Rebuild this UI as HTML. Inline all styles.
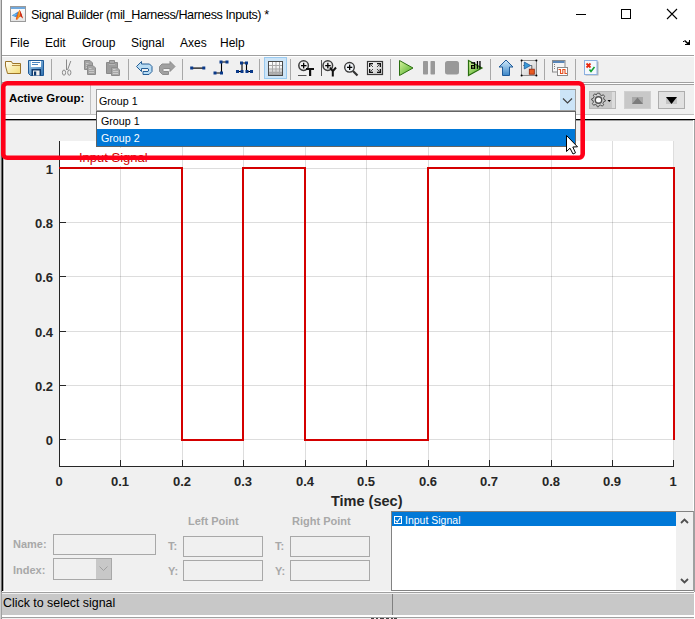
<!DOCTYPE html>
<html><head><meta charset="utf-8">
<style>
*{margin:0;padding:0;box-sizing:border-box}
html,body{width:695px;height:619px;overflow:hidden;background:#f0f0f0;font-family:"Liberation Sans",sans-serif;position:relative}
.a{position:absolute}
.t{position:absolute;white-space:nowrap;line-height:1}
.xl{width:60px;text-align:center;font-size:13px;font-weight:bold;color:#262626}
.gl{font-size:11px;font-weight:bold;color:#a8a8a8}
.yl{width:53px;text-align:right;font-size:13px;font-weight:bold;color:#262626}
</style></head><body>
<!-- title bar -->
<div class="a" style="left:0;top:0;width:695px;height:55px;background:#fff"></div>
<div class="a" style="left:0;top:0;width:1px;height:619px;background:#d0d0d0"></div>
<div class="a" style="left:1px;top:0;width:1px;height:619px;background:#8c8c8c"></div>
<div class="a" style="left:694px;top:0;width:1px;height:619px;background:#fff"></div>
<div class="t" style="left:31px;top:8.6px;font-size:12.6px;letter-spacing:-0.41px;color:#000">Signal Builder (mil_Harness/Harness Inputs) *</div>
<!-- title icon -->
<svg class="a" style="left:0;top:0" width="40" height="30">
<defs><linearGradient id="gW" x1="0" y1="0" x2="0" y2="1"><stop offset="0" stop-color="#ffffff"/><stop offset="1" stop-color="#e4e4e4"/></linearGradient>
<linearGradient id="gO" x1="0" y1="0" x2="0" y2="1"><stop offset="0" stop-color="#e83010"/><stop offset="0.5" stop-color="#f09020"/><stop offset="1" stop-color="#f0b020"/></linearGradient></defs>
<rect x="10.5" y="6.5" width="15" height="15" fill="url(#gW)" stroke="#9a9a9a" stroke-width="1"/>
<rect x="11" y="7" width="14" height="2" fill="#70a8dc"/>
<path d="M11.8 15.4 L15.5 13.2 L18.2 11.6 L18.6 13 L16.4 17.2 L14.2 16.6 Z" fill="#3d8fd6"/>
<path d="M12.5 15.3 L16 13.5 L17 14.5 L14.5 16 Z" fill="#6cb4ec"/>
<path d="M19.6 9.8 L18 12.5 L16.3 17 L15.8 19.2 L17 20 L18.6 18 L20.6 16.3 L22.9 18.6 L21.6 14.2 Z" fill="#e85a18"/>
<path d="M19.6 9.8 L18.8 12 L18 16 L17 19.5 L18.6 18 L19.8 15 Z" fill="#f4a21c"/>
<path d="M19.6 9.8 L19.4 12 L19.2 14.5 L20 13 Z" fill="#ffd040"/>
<path d="M19.6 9.8 L21.6 14.2 L22.9 18.6 L20.6 16.3 Z" fill="#c8281a"/>
</svg>
<!-- menu arrow -->
<svg class="a" style="left:680px;top:37px" width="14" height="12">
<rect x="3" y="4" width="1" height="1" fill="#000"/>
<path d="M4.5 3.5 L9 7.5" stroke="#000" stroke-width="1.6"/>
<path d="M9 3 H10 V8 H5 V7 H9 Z" fill="#000"/>
<path d="M10 3.5 L10 8 L5.5 8 Z" fill="#000"/>
</svg>

<!-- window controls -->
<div class="a" style="left:576px;top:14px;width:10px;height:1px;background:#000"></div>
<div class="a" style="left:621px;top:9px;width:10px;height:10px;border:1px solid #000"></div>
<svg class="a" style="left:666px;top:8px" width="12" height="12"><path d="M1 1L11 11M11 1L1 11" stroke="#000" stroke-width="1.1"/></svg>
<!-- menu -->
<div class="t" style="left:10px;top:37px;font-size:12px">File</div>
<div class="t" style="left:45px;top:37px;font-size:12px">Edit</div>
<div class="t" style="left:82px;top:37px;font-size:12px">Group</div>
<div class="t" style="left:131px;top:37px;font-size:12px">Signal</div>
<div class="t" style="left:180px;top:37px;font-size:12px">Axes</div>
<div class="t" style="left:220px;top:37px;font-size:12px">Help</div>
<div class="a" style="left:2px;top:55px;width:692px;height:1px;background:#a0a0a0"></div>
<div class="a" style="left:2px;top:56px;width:692px;height:1px;background:#fff"></div>
<!-- toolbar -->
<svg class="a" style="left:0;top:0" width="695" height="84">
<defs>
<linearGradient id="gF" x1="0" y1="0" x2="1" y2="1"><stop offset="0" stop-color="#fffef5"/><stop offset="1" stop-color="#f3dc72"/></linearGradient>
<linearGradient id="gS" x1="0" y1="0" x2="1" y2="1"><stop offset="0" stop-color="#a9d3f2"/><stop offset="1" stop-color="#2e6fae"/></linearGradient>
<linearGradient id="gG" x1="0" y1="0" x2="0" y2="1"><stop offset="0" stop-color="#ffffff"/><stop offset="0.5" stop-color="#f0f0f0"/><stop offset="1" stop-color="#9a9a9a"/></linearGradient>
<linearGradient id="gP" x1="0" y1="0" x2="1" y2="1"><stop offset="0" stop-color="#d8f5a0"/><stop offset="1" stop-color="#46a820"/></linearGradient>
<linearGradient id="gU" x1="0" y1="0" x2="0" y2="1"><stop offset="0" stop-color="#d4ecfb"/><stop offset="1" stop-color="#3a86c8"/></linearGradient>
<linearGradient id="gB" x1="0" y1="0" x2="1" y2="1"><stop offset="0" stop-color="#ffffff"/><stop offset="1" stop-color="#c8c8c8"/></linearGradient>
</defs>
<!-- separators -->
<g fill="#a8a8a8">
<rect x="51" y="59" width="1" height="21"/>
<rect x="128" y="59" width="1" height="21"/>
<rect x="182" y="59" width="1" height="21"/>
<rect x="259" y="59" width="1" height="21"/>
<rect x="290" y="59" width="1" height="21"/>
<rect x="390" y="59" width="1" height="21"/>
<rect x="490" y="59" width="1" height="21"/>
<rect x="544" y="59" width="1" height="21"/>
<rect x="575" y="59" width="1" height="21"/>
</g>
<!-- open folder -->
<path d="M5.5 61.5 H11.5 L12.5 63.5 H20.5 V73.5 H7.5 L5.5 66 Z" fill="url(#gF)" stroke="#9c7428" stroke-width="1"/>
<path d="M12 65.5 H20" stroke="#b89040" stroke-width="1"/>
<!-- save -->
<path d="M28.5 60.5 H43.5 V75.5 H30.5 L28.5 73.5 Z" fill="url(#gS)" stroke="#1e5a98" stroke-width="1"/>
<rect x="31" y="61" width="10" height="6" fill="#fff"/>
<rect x="32" y="62" width="8" height="1" fill="#4a86c0"/>
<rect x="32" y="64" width="6" height="1" fill="#4a86c0"/>
<rect x="31.5" y="69" width="9.5" height="6.5" fill="#0e3a6e"/>
<rect x="33" y="70.5" width="6.5" height="5" fill="#f0f0f0"/>
<rect x="34" y="71.5" width="2.2" height="4" fill="#0e3a6e"/>
<!-- scissors -->
<g stroke="#8a8a8a" fill="none" stroke-width="1">
<path d="M66.5 59.5 V70"/>
<path d="M70.8 61 L67.5 70"/>
<ellipse cx="64" cy="72.6" rx="1.6" ry="2.6"/>
<ellipse cx="69.3" cy="72.6" rx="1.6" ry="2.6"/>
</g>
<!-- copy -->
<path d="M84.5 60.5 H90 L92.5 63 V69.5 H84.5 Z" fill="#a4a4a4" stroke="#8c8c8c" stroke-width="1"/>
<path d="M86 63.5 H88.5 M86 65.5 H90 M86 67.5 H87" stroke="#c8c8c8" stroke-width="1"/>
<path d="M87.5 65.5 H93 L95.5 68 V74.5 H87.5 Z" fill="#a4a4a4" stroke="#8c8c8c" stroke-width="1"/>
<path d="M89 68.5 H91.5 M89 70.5 H94 M89 72.5 H94" stroke="#c8c8c8" stroke-width="1"/>
<!-- paste -->
<path d="M106.5 62.5 H117.5 V73.5 H106.5 Z" fill="#9c9c9c" stroke="#8a8a8a" stroke-width="1"/>
<path d="M109.5 60.5 H114.5 V63.5 H109.5 Z" fill="#a8a8a8" stroke="#8a8a8a" stroke-width="1"/>
<path d="M109 64.5 H115" stroke="#b4b4b4" stroke-width="1"/>
<path d="M111.5 67.5 H117 L119.5 70 V75.5 H111.5 Z" fill="#a8a8a8" stroke="#8c8c8c" stroke-width="1"/>
<path d="M113 69.5 H115.5 M113 71.5 H118 M113 73.5 H118" stroke="#cccccc" stroke-width="1"/>
<!-- undo -->
<path d="M136.5 66.5 L141.5 61.5 V64 H149.5 L152 66.5 V71.5 L149 74.5 H143 V71.5 H148 L148.5 71 V69 L148 68.5 H141.5 V71.5 Z" fill="#b8dcf4" stroke="#245e96" stroke-width="1"/>
<!-- redo -->
<path d="M175 66.5 L170 61.5 V64 H162 L159.5 66.5 V71.5 L162.5 74.5 H168.5 V71.5 H163.5 L163 71 V69 L163.5 68.5 H170 V71.5 Z" fill="#a0a0a0" stroke="#8c8c8c" stroke-width="1"/>
<!-- line icon -->
<rect x="192" y="67.5" width="12" height="1.2" fill="#000"/>
<rect x="190.2" y="66.5" width="3" height="3" fill="#0a3a8a"/>
<rect x="202.3" y="66.5" width="3" height="3" fill="#0a3a8a"/>
<!-- step icon -->
<path d="M215 73 H221.5 V62 H227" fill="none" stroke="#000" stroke-width="1.1"/>
<g fill="#0a3a8a">
<rect x="213.5" y="71.5" width="3" height="3"/><rect x="220" y="71.5" width="3" height="3"/>
<rect x="219.5" y="60.5" width="3" height="3"/><rect x="225.5" y="60.5" width="3" height="3"/>
</g>
<!-- pulse icon -->
<path d="M237.5 71.5 H242 V63 H246.5 V71.5 H251.5" fill="none" stroke="#000" stroke-width="1.1"/>
<g fill="#0a3a8a">
<rect x="236" y="70" width="3" height="3"/><rect x="240.5" y="70" width="3" height="3"/>
<rect x="240" y="61.5" width="3" height="3"/><rect x="245" y="61.5" width="3" height="3"/>
<rect x="245.5" y="70" width="3" height="3"/><rect x="250" y="70" width="3" height="3"/>
</g>
<!-- grid button -->
<rect x="264.5" y="57.5" width="22" height="21" fill="#cce4f7" stroke="#99c9ef" stroke-width="1"/>
<rect x="268.5" y="61.5" width="14" height="14" fill="url(#gG)" stroke="#4a4a4a" stroke-width="1"/>
<g fill="#a8a8a8">
<rect x="272" y="62" width="1" height="13"/><rect x="275.5" y="62" width="1" height="13"/><rect x="279" y="62" width="1" height="13"/>
<rect x="269" y="65" width="13" height="1"/><rect x="269" y="68.5" width="13" height="1"/><rect x="269" y="72" width="13" height="1"/>
</g>
<!-- zoom T -->
<circle cx="303.6" cy="65.6" r="4.8" fill="#ececec" stroke="#3c3c3c" stroke-width="1.5"/>
<rect x="301" y="65" width="5.5" height="1.3" fill="#000"/><rect x="303" y="62.8" width="1.3" height="5.6" fill="#000"/>
<path d="M306 68 H314 V70 H311.2 V76 H309 V70 H306 Z" fill="#111"/>
<rect x="298" y="75" width="8.5" height="1" fill="#555"/>
<!-- zoom Y -->
<rect x="321" y="60" width="1" height="16" fill="#555"/>
<circle cx="327.8" cy="65.6" r="4.8" fill="#ececec" stroke="#3c3c3c" stroke-width="1.5"/>
<rect x="325.2" y="65" width="5.5" height="1.3" fill="#000"/><rect x="327.2" y="62.8" width="1.3" height="5.6" fill="#000"/>
<path d="M330 67.5 L332.8 71.2 L336 67.5 M332.8 70.5 V76.5" fill="none" stroke="#111" stroke-width="2"/>
<!-- zoom -->
<path d="M353 71 L357.5 75.5" stroke="#333" stroke-width="2.2"/>
<circle cx="349.5" cy="67.3" r="4.8" fill="#f0f4f8" stroke="#3a3a3a" stroke-width="1.4"/>
<rect x="347" y="66.7" width="5.3" height="1.3" fill="#000"/><rect x="349" y="64.6" width="1.3" height="5.4" fill="#000"/>
<!-- fit -->
<rect x="367.5" y="61.5" width="15" height="13" fill="url(#gB)" stroke="#3a3a3a" stroke-width="1.2"/>
<g fill="#111">
<rect x="369" y="63" width="4" height="1.3"/><rect x="369" y="63" width="1.3" height="4"/>
<rect x="377" y="63" width="4" height="1.3"/><rect x="379.7" y="63" width="1.3" height="4"/>
<rect x="369" y="71.7" width="4" height="1.3"/><rect x="369" y="69" width="1.3" height="4"/>
<rect x="377" y="71.7" width="4" height="1.3"/><rect x="379.7" y="69" width="1.3" height="4"/>
</g>
<path d="M370.5 64.5 L373 67 M379.5 64.5 L377 67 M370.5 71.5 L373 69 M379.5 71.5 L377 69" stroke="#333" stroke-width="0.9"/>
<!-- play -->
<path d="M399.5 60.5 L413 68 L399.5 75.5 Z" fill="url(#gP)" stroke="#2a6e10" stroke-width="1"/>
<!-- pause -->
<rect x="423" y="61" width="5" height="13.5" rx="0.8" fill="#999"/>
<rect x="430.5" y="61" width="4.5" height="13.5" rx="0.8" fill="#999"/>
<!-- stop -->
<rect x="445" y="61" width="14" height="13.5" rx="2.5" fill="#999"/>
<!-- play all -->
<path d="M468.5 60.5 L482 68 L468.5 75.5 Z" fill="url(#gP)" stroke="#2a6e10" stroke-width="1.2"/>
<g fill="#000"><rect x="471" y="62.3" width="4" height="1.2"/><rect x="474" y="62.3" width="1.2" height="6.5"/><rect x="471" y="65" width="4" height="1.2"/><rect x="471" y="65" width="1.2" height="3.8"/><rect x="471" y="67.6" width="4" height="1.2"/><rect x="476.8" y="61" width="1.3" height="7.8"/><rect x="479.3" y="61" width="1.3" height="7.8"/></g>
<!-- up arrow -->
<path d="M506 60 L513 67 H509.5 V75.5 H502.5 V67 H499 Z" fill="url(#gU)" stroke="#1e5a98" stroke-width="1"/>
<!-- block icon -->
<rect x="521.5" y="60.5" width="15" height="15" fill="url(#gB)" stroke="#8c8c8c" stroke-width="1"/>
<g fill="#000"><circle cx="521.6" cy="60.6" r="1"/><circle cx="536.4" cy="60.6" r="1"/><circle cx="521.6" cy="75.4" r="1"/><circle cx="536.4" cy="75.4" r="1"/></g>
<path d="M523 65.5 H524.5" stroke="#666" stroke-width="0.8"/>
<path d="M530.5 65.5 H531.8 V69" stroke="#555" stroke-width="0.9" fill="none"/>
<path d="M524.3 62 L530.5 65.5 L524.3 69 Z" fill="#3a9ad8" stroke="#1a5a9a" stroke-width="0.8"/>
<rect x="529.3" y="69.2" width="5" height="5" fill="#e85a20" stroke="#902008" stroke-width="0.8"/>
<!-- signal editor -->
<rect x="552.5" y="60.5" width="12.5" height="11.5" fill="#f4f4f4" stroke="#8a8a8a" stroke-width="1"/>
<rect x="553" y="61" width="11.5" height="2" fill="#5a86b8"/>
<g fill="#808080"><rect x="554" y="64" width="1" height="1"/><rect x="554" y="66" width="1" height="1"/><rect x="554" y="68" width="1" height="1"/></g>
<rect x="557.5" y="67.5" width="10" height="8" fill="#fff" stroke="#8a8a8a" stroke-width="1"/>
<path d="M558.5 69.5 H560.5 V73.5 H562.8 V69.5 H565 V73.5 H567" fill="none" stroke="#e85020" stroke-width="1.1"/>
<!-- verify -->
<rect x="585.5" y="61.5" width="13" height="14" fill="#b0b0b0"/>
<rect x="584.5" y="60.5" width="12.5" height="14" fill="#f4f8fd" stroke="#8cb0e0" stroke-width="1"/>
<path d="M586.5 63.5 L590.5 67.5 M590.5 63.5 L586.5 67.5" stroke="#e82a10" stroke-width="1.8"/>
<path d="M589.5 69.5 L591 71.5 L594.5 67" fill="none" stroke="#10a030" stroke-width="1.6"/>
</svg>

<div class="a" style="left:2px;top:82px;width:692px;height:1px;background:#a0a0a0"></div>
<div class="a" style="left:2px;top:83px;width:692px;height:1px;background:#fff"></div>
<div class="a" style="left:2px;top:84px;width:692px;height:1px;background:#a0a0a0"></div>

<!-- active group panel -->
<div class="t" style="left:9px;top:93px;font-size:11.4px;font-weight:bold">Active Group:</div>
<div class="a" style="left:96px;top:89px;width:480px;height:22px;background:#fff;border:1px solid #a0a0a0"></div>
<div class="t" style="left:99px;top:96px;font-size:10.7px">Group 1</div>
<!-- label box -->
<div class="a" style="left:5px;top:85px;width:1px;height:30px;background:#fff"></div>
<div class="a" style="left:90px;top:85px;width:1px;height:30px;background:#c0c0c0"></div>
<!-- combo dropdown button -->
<div class="a" style="left:560px;top:90px;width:15px;height:20px;background:#cce4f7"></div>
<svg class="a" style="left:561px;top:96px" width="13" height="9"><path d="M2 2.5 L6.5 7 L11 2.5" fill="none" stroke="#404040" stroke-width="1.1"/></svg>
<!-- gear button -->
<div class="a" style="left:589px;top:91px;width:27px;height:18px;background:#c8c8c8;border:1px solid #b8b8b8"></div>
<div class="a" style="left:612px;top:92px;width:3px;height:16px;background:#dcdcdc"></div>
<svg class="a" style="left:589px;top:91px" width="27" height="18">
<g transform="translate(9.5 9)">
<path d="M-1.2 -6.8 H1.2 L1.6 -5.2 L3.4 -4.4 L4.8 -5.3 L6.1 -3.6 L5.1 -2.2 L5.4 -0.6 L6.8 0 L6.8 1.2 L5.3 1.6 L4.4 3.4 L5.3 4.8 L3.6 6.1 L2.2 5.1 L0.6 5.4 L0 6.8 L-1.2 6.8 L-1.6 5.3 L-3.4 4.4 L-4.8 5.3 L-6.1 3.6 L-5.1 2.2 L-5.4 0.6 L-6.8 0 L-6.8 -1.2 L-5.3 -1.6 L-4.4 -3.4 L-5.3 -4.8 L-3.6 -6.1 L-2.2 -5.1 Z" fill="#d0d0d0" stroke="#505050" stroke-width="1" stroke-linejoin="round"/>
<circle r="3.2" fill="#fff" stroke="#505050" stroke-width="1.4"/>
<circle r="1.6" fill="#fff"/>
</g>
<path d="M18.5 9 H22 L20.25 11 Z" fill="#000"/>
</svg>
<!-- up button -->
<div class="a" style="left:624px;top:91px;width:27px;height:18px;background:#c8c8c8;border:1px solid #d0d0d0"></div>
<div class="a" style="left:632px;top:97px;width:11px;height:7px;background:#a8a8a8"></div>
<svg class="a" style="left:632px;top:97px" width="11" height="7"><path d="M0 7 L5.5 0.5 L11 7 Z" fill="#7c7c7c"/></svg>
<!-- down button -->
<div class="a" style="left:658px;top:91px;width:27px;height:18px;background:#e1e1e1;border:1px solid #adadad"></div>
<div class="a" style="left:666px;top:97px;width:11px;height:7px;background:#c4c4c4"></div>
<svg class="a" style="left:666px;top:97px" width="11" height="8"><path d="M0 0 L11 0 L5.5 7 Z" fill="#000"/></svg>

<div class="a" style="left:5px;top:114px;width:689px;height:1px;background:#c0c0c0"></div>
<div class="a" style="left:5px;top:115px;width:689px;height:4px;background:#fff"></div>
<div class="a" style="left:2px;top:119px;width:693px;height:1px;background:#000"></div>
<div class="a" style="left:3px;top:120px;width:691px;height:1px;background:#a0a0a0"></div>
<div class="a" style="left:693px;top:120px;width:1px;height:472px;background:#fff"></div>
<div class="a" style="left:694px;top:120px;width:1px;height:472px;background:#a0a0a0"></div>
<div class="a" style="left:2px;top:119px;width:1px;height:473px;background:#000"></div>
<div class="a" style="left:1px;top:119px;width:1px;height:473px;background:#6a6a6a"></div>
<div class="a" style="left:3px;top:120px;width:1px;height:472px;background:#b0b0b0"></div>
<div class="a" style="left:4px;top:120px;width:1px;height:472px;background:#fafafa"></div>

<!-- plot -->
<div class="a" style="left:59px;top:141px;width:615px;height:326px;background:#fff"></div>
<svg class="a" style="left:0;top:0" width="695" height="619" shape-rendering="crispEdges">
<rect x="120" y="141" width="1" height="325" fill="#000" fill-opacity="0.135"/>
<rect x="182" y="141" width="1" height="325" fill="#000" fill-opacity="0.135"/>
<rect x="243" y="141" width="1" height="325" fill="#000" fill-opacity="0.135"/>
<rect x="305" y="141" width="1" height="325" fill="#000" fill-opacity="0.135"/>
<rect x="366" y="141" width="1" height="325" fill="#000" fill-opacity="0.135"/>
<rect x="428" y="141" width="1" height="325" fill="#000" fill-opacity="0.135"/>
<rect x="489" y="141" width="1" height="325" fill="#000" fill-opacity="0.135"/>
<rect x="551" y="141" width="1" height="325" fill="#000" fill-opacity="0.135"/>
<rect x="612" y="141" width="1" height="325" fill="#000" fill-opacity="0.135"/>
<rect x="673" y="141" width="1" height="325" fill="#000" fill-opacity="0.135"/>
<rect x="60" y="439" width="613" height="1" fill="#000" fill-opacity="0.135"/>
<rect x="60" y="385" width="613" height="1" fill="#000" fill-opacity="0.135"/>
<rect x="60" y="331" width="613" height="1" fill="#000" fill-opacity="0.135"/>
<rect x="60" y="276" width="613" height="1" fill="#000" fill-opacity="0.135"/>
<rect x="60" y="222" width="613" height="1" fill="#000" fill-opacity="0.135"/>
<rect x="60" y="168" width="613" height="1" fill="#000" fill-opacity="0.135"/>
<rect x="59" y="141" width="1" height="326" fill="#262626"/>
<rect x="59" y="466" width="615" height="1" fill="#262626"/>
<rect x="59" y="460" width="1" height="6" fill="#262626"/>
<rect x="120" y="460" width="1" height="6" fill="#262626"/>
<rect x="182" y="460" width="1" height="6" fill="#262626"/>
<rect x="243" y="460" width="1" height="6" fill="#262626"/>
<rect x="305" y="460" width="1" height="6" fill="#262626"/>
<rect x="366" y="460" width="1" height="6" fill="#262626"/>
<rect x="428" y="460" width="1" height="6" fill="#262626"/>
<rect x="489" y="460" width="1" height="6" fill="#262626"/>
<rect x="551" y="460" width="1" height="6" fill="#262626"/>
<rect x="612" y="460" width="1" height="6" fill="#262626"/>
<rect x="673" y="460" width="1" height="6" fill="#262626"/>
<rect x="60" y="439" width="6" height="1" fill="#262626"/>
<rect x="60" y="385" width="6" height="1" fill="#262626"/>
<rect x="60" y="331" width="6" height="1" fill="#262626"/>
<rect x="60" y="276" width="6" height="1" fill="#262626"/>
<rect x="60" y="222" width="6" height="1" fill="#262626"/>
<rect x="60" y="168" width="6" height="1" fill="#262626"/>
</svg>
<svg class="a" style="left:0;top:0" width="695" height="619" shape-rendering="crispEdges"><path d="M59 168 L182 168 L182 440 L243 440 L243 168 L305 168 L305 440 L428 440 L428 168 L674 168 L674 440" fill="none" stroke="#d40000" stroke-width="2" stroke-linejoin="miter"/></svg>
<div class="t xl" style="left:29px;top:475px">0</div>
<div class="t xl" style="left:90px;top:475px">0.1</div>
<div class="t xl" style="left:152px;top:475px">0.2</div>
<div class="t xl" style="left:213px;top:475px">0.3</div>
<div class="t xl" style="left:275px;top:475px">0.4</div>
<div class="t xl" style="left:336px;top:475px">0.5</div>
<div class="t xl" style="left:398px;top:475px">0.6</div>
<div class="t xl" style="left:459px;top:475px">0.7</div>
<div class="t xl" style="left:521px;top:475px">0.8</div>
<div class="t xl" style="left:582px;top:475px">0.9</div>
<div class="t xl" style="left:643px;top:475px">1</div>
<div class="t yl" style="left:0px;top:434px">0</div>
<div class="t yl" style="left:0px;top:380px">0.2</div>
<div class="t yl" style="left:0px;top:326px">0.4</div>
<div class="t yl" style="left:0px;top:271px">0.6</div>
<div class="t yl" style="left:0px;top:217px">0.8</div>
<div class="t yl" style="left:0px;top:163px">1</div>
<div class="t" style="left:77px;top:148px;padding:3px 2px 2px 2px;background:#fff;font-size:13px;color:#d00000">Input Signal</div>
<div class="t" style="left:331px;top:494px;font-size:14.5px;font-weight:bold;color:#262626">Time (sec)</div>


<!-- dropdown -->
<div class="a" style="left:96px;top:111px;width:480px;height:36px;background:#fff;border:1px solid #646464"></div>
<div class="a" style="left:97px;top:129px;width:478px;height:17px;background:#0078d7"></div>
<div class="t" style="left:101px;top:116px;font-size:10.7px">Group 1</div>
<div class="t" style="left:101px;top:133px;font-size:10.7px;color:#fff">Group 2</div>

<!-- mouse cursor -->
<svg class="a" style="left:565px;top:134px" width="16" height="24">
<path d="M1.5 1.5 L1.5 17.5 L5 14.2 L8 20 L10.5 18.8 L7.8 13 L12.5 12.8 Z" fill="#fff" stroke="#000" stroke-width="1" stroke-linejoin="miter"/>
</svg>

<!-- red highlight -->
<svg class="a" style="left:0;top:0" width="600" height="170"><rect x="3.3" y="83.3" width="579.4" height="74.4" rx="3.8" fill="none" stroke="#ff0019" stroke-width="4.6"/></svg>

<!-- bottom controls -->
<div class="t gl" style="left:13px;top:539px">Name:</div>
<div class="a" style="left:53px;top:534px;width:103px;height:21px;border:1px solid #a8a8a8"></div>
<div class="t gl" style="left:13px;top:565px">Index:</div>
<div class="a" style="left:53px;top:558px;width:59px;height:22px;border:1px solid #a8a8a8"></div>
<div class="a" style="left:96px;top:559px;width:15px;height:20px;background:#c8c8c8"></div>
<svg class="a" style="left:98px;top:565px" width="11" height="8"><path d="M1.5 1.5 L5.5 5.5 L9.5 1.5" fill="none" stroke="#a0a0a0" stroke-width="1"/></svg>
<div class="t gl" style="left:188px;top:516px">Left Point</div>
<div class="t gl" style="left:292px;top:516px">Right Point</div>
<div class="t gl" style="left:168px;top:541px">T:</div>
<div class="t gl" style="left:168px;top:566px">Y:</div>
<div class="t gl" style="left:275px;top:541px">T:</div>
<div class="t gl" style="left:275px;top:566px">Y:</div>
<div class="a" style="left:183px;top:536px;width:80px;height:21px;border:1px solid #a8a8a8"></div>
<div class="a" style="left:183px;top:560px;width:80px;height:21px;border:1px solid #a8a8a8"></div>
<div class="a" style="left:290px;top:536px;width:80px;height:21px;border:1px solid #a8a8a8"></div>
<div class="a" style="left:290px;top:560px;width:80px;height:21px;border:1px solid #a8a8a8"></div>
<!-- signal list -->
<div class="a" style="left:391px;top:511px;width:303px;height:80px;background:#fff;border:1px solid #828282;border-right:1px solid #a0a0a0"></div>
<div class="a" style="left:392px;top:512px;width:284px;height:14px;background:#0078d7"></div>
<div class="a" style="left:676px;top:512px;width:17px;height:78px;background:#f0f0f0"></div>
<svg class="a" style="left:679px;top:517px" width="12" height="8"><path d="M2 6 L5.5 2.5 L9 6" fill="none" stroke="#505050" stroke-width="1.8"/></svg>
<svg class="a" style="left:679px;top:577px" width="12" height="8"><path d="M2 2 L5.5 5.5 L9 2" fill="none" stroke="#505050" stroke-width="1.8"/></svg>
<div class="a" style="left:394px;top:516px;width:8px;height:8px;border:1px solid #fff"></div>
<svg class="a" style="left:394px;top:516px" width="8" height="8"><path d="M1.5 4 L3.2 6 L6.5 1.5" fill="none" stroke="#fff" stroke-width="1.1"/></svg>
<div class="t" style="left:405px;top:515px;font-size:10.5px;color:#fff">Input Signal</div>
<!-- status bar -->
<div class="a" style="left:2px;top:591px;width:692px;height:1px;background:#fff"></div>
<div class="a" style="left:1px;top:592px;width:693px;height:1px;background:#a0a0a0"></div>
<div class="a" style="left:1px;top:593px;width:1px;height:25px;background:#a0a0a0"></div>
<div class="a" style="left:2px;top:594px;width:692px;height:21px;background:#c8c8c8"></div>
<div class="a" style="left:392px;top:594px;width:1px;height:21px;background:#808080"></div>
<div class="a" style="left:2px;top:615px;width:692px;height:2px;background:#fff"></div>
<div class="a" style="left:2px;top:617px;width:692px;height:1px;background:#a0a0a0"></div>
<svg class="a" style="left:370px;top:618px" width="30" height="1"><g fill="#404040"><rect x="1" y="0" width="3" height="1"/><rect x="6" y="0" width="2" height="1"/><rect x="10" y="0" width="4" height="1"/><rect x="16" y="0" width="3" height="1"/><rect x="21" y="0" width="2" height="1"/><rect x="24" y="0" width="3" height="1"/></g></svg>
<div class="t" style="left:3px;top:597px;font-size:12.4px">Click to select signal</div>
</body></html>
